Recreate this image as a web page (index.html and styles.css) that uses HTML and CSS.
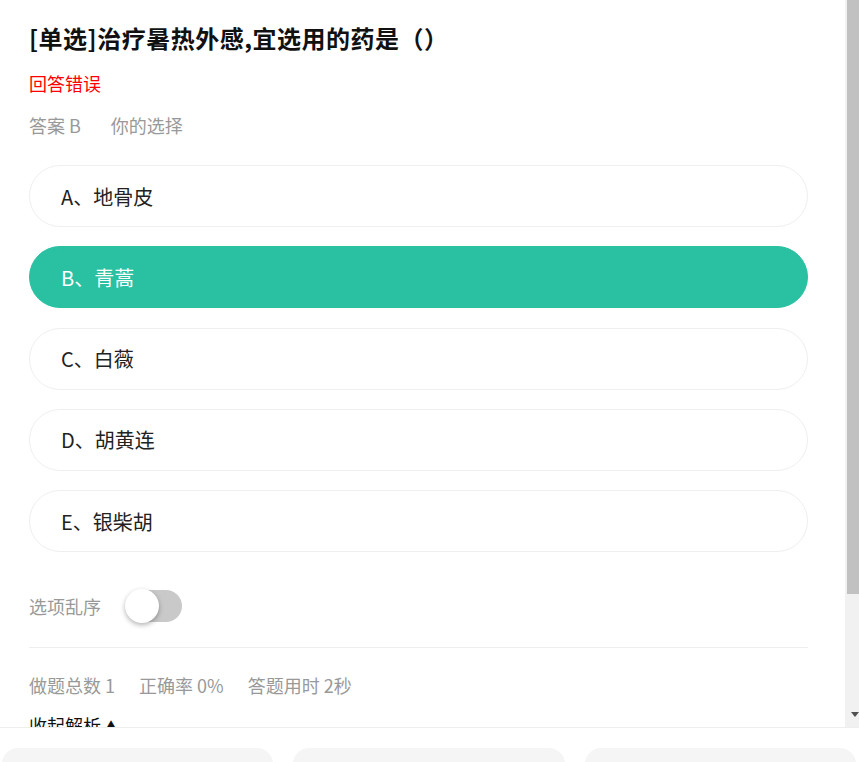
FILE: index.html
```html
<!DOCTYPE html>
<html lang="zh-CN">
<head>
  <meta charset="UTF-8" />
  <title>单选练习</title>
  <link rel="stylesheet" href="styles.css">
</head>
<body>
  <div class="page">
    <div class="main">
      <div class="content">
        <h1 class="title">[单选]治疗暑热外感,宜选用的药是（）</h1>
        <p class="result">回答错误</p>
        <p class="answer"><span>答案 B</span><span>你的选择</span></p>

        <ul class="options">
          <li class="option">A、地骨皮</li>
          <li class="option selected">B、青蒿</li>
          <li class="option">C、白薇</li>
          <li class="option">D、胡黄连</li>
          <li class="option">E、银柴胡</li>
        </ul>

        <div class="shuffle">
          <span>选项乱序</span>
          <span class="switch"><span class="knob"></span></span>
        </div>

        <div class="stats">
          <span>做题总数 1</span>
          <span>正确率 0%</span>
          <span>答题用时 2秒</span>
        </div>

        <div class="analysis-toggle">收起解析 <span class="arrow">▲</span></div>
      </div>

      <!-- scrollbar of the question pane -->
      <div class="scrollbar">
        <div class="thumb"></div>
        <div class="track-end"><span class="down"></span></div>
      </div>
    </div>

    <div class="bottom-bar">
      <div class="bar-btn"></div>
      <div class="bar-btn"></div>
      <div class="bar-btn"></div>
    </div>
  </div>
</body>
</html>
```

FILE: styles.css
```css
html, body {
  margin: 0;
  padding: 0;
  height: 100%;
}
*, *:before, *:after {
  box-sizing: border-box;
}

body {
  font-family: "Noto Sans CJK SC", "Noto Sans", sans-serif;
  background: #fff;
  color: #222;
  overflow: hidden;
}

.page {
  height: 762px;
  display: flex;
  flex-direction: column;
}

.main {
  height: 727px;
  display: flex;
  overflow: hidden;
}

.content {
  flex: 1;
  min-width: 0;
  padding: 22px 37px 0 29px;
  overflow: hidden;
}

/* Scrollbar */
.scrollbar {
  width: 14px;
  background: #f1f1f1;
  display: flex;
  flex-direction: column;
}
.thumb {
  height: 594px;
  background: #c1c1c1;
  border-left: 2px solid #f1f1f1;
}
.track-end {
  flex: 1;
  display: flex;
  align-items: flex-end;
  justify-content: flex-end;
  padding-bottom: 10px;
}
.down {
  width: 0;
  height: 0;
  border-left: 4px solid transparent;
  border-right: 4px solid transparent;
  border-top: 5px solid #505050;
}

.title {
  margin: 0;
  font-size: 24px;
  line-height: 32px;
  font-weight: 700;
  color: #111;
  letter-spacing: 0.5px;
}

.result {
  margin: 15px 0 0;
  font-size: 18px;
  line-height: 28px;
  color: #f00;
}

.answer {
  margin: 14px 0 0;
  font-size: 18px;
  line-height: 28px;
  color: #999;
  display: flex;
  gap: 30px;
}

.options {
  list-style: none;
  margin: 26px 0 0;
  padding: 0;
  display: flex;
  flex-direction: column;
  gap: 19.25px;
}

.option {
  height: 62px;
  border: 1px solid #efefef;
  border-radius: 31px;
  padding: 0 31px;
  display: flex;
  align-items: center;
  font-size: 20px;
  color: #222;
}
.option.selected {
  background: #29c1a1;
  border-color: #29c1a1;
  color: #fff;
}

.shuffle {
  margin-top: 38px;
  height: 32px;
  display: flex;
  align-items: center;
  gap: 25px;
  font-size: 18px;
  color: #999;
}

.switch {
  position: relative;
  width: 56px;
  height: 32px;
  border-radius: 16px;
  background: #c9c9c9;
}
.knob {
  position: absolute;
  top: -1px;
  left: -1px;
  width: 34px;
  height: 34px;
  border-radius: 50%;
  background: #fff;
  box-shadow: 0 2px 5px rgba(0, 0, 0, 0.3);
}

.stats {
  margin-top: 25px;
  border-top: 1px solid #eee;
  padding-top: 23px;
  display: flex;
  gap: 24px;
  font-size: 18px;
  line-height: 28px;
  color: #999;
}

.analysis-toggle {
  margin-top: 12px;
  font-size: 18px;
  line-height: 28px;
  color: #111;
}
.analysis-toggle .arrow {
  font-size: 12px;
  vertical-align: 2px;
}

.bottom-bar {
  height: 35px;
  border-top: 1px solid #eee;
  padding: 20px 3px 0 2px;
  display: flex;
  gap: 20px;
  overflow: hidden;
}
.bar-btn {
  flex: 1;
  height: 50px;
  border-radius: 16px;
  background: #f5f5f5;
}
```
